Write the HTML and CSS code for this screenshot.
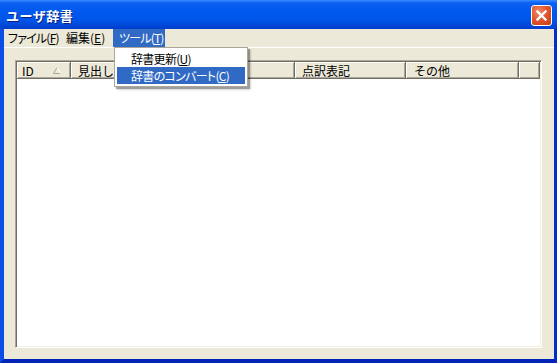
FILE: index.html
```html
<!DOCTYPE html>
<html lang="ja">
<head>
  <meta charset="UTF-8">
  <title>ユーザ辞書</title>
  <link rel="stylesheet" href="styles.css">
</head>
<body>
  <div class="window">
    <div class="titlebar">
      <span class="title">ユーザ辞書</span>
      <button class="close">
        <svg width="11" height="11" viewBox="0 0 11 11"><path d="M1.5 1.5 L9.5 9.5 M9.5 1.5 L1.5 9.5" stroke="#fff" stroke-width="2.4" stroke-linecap="square"/></svg>
      </button>
    </div>
    <div class="frame">
      <div class="menubar">
        <span class="menu menu-file">ファイル(<u>F</u>)</span>
        <span class="menu menu-edit">編集(<u>E</u>)</span>
        <span class="menu menu-tool active">ツール(<u>T</u>)</span>
      </div>
      <div class="client">
        <div class="listview">
          <div class="header">
            <div class="col col-id">ID
              <svg class="sort" width="8" height="7" viewBox="0 0 8 7"><path d="M4 0.5 L0.5 6.5 H7.5" fill="none" stroke="#aca899"/><path d="M4 0.5 L7.5 6.5" fill="none" stroke="#fff"/></svg>
            </div>
            <div class="col col-midashi">見出し</div>
            <div class="col col-yomi"></div>
            <div class="col col-tenyaku">点訳表記</div>
            <div class="col col-other">その他</div>
            <div class="col col-fill"></div>
          </div>
          <div class="rows"></div>
        </div>
      </div>
    </div>

    <div class="dropdown">
      <div class="item">辞書更新(<u>U</u>)</div>
      <div class="item selected">辞書のコンバート(<u>C</u>)</div>
    </div>
  </div>
</body>
</html>
```

FILE: styles.css
```css
body { margin: 0; background: #ece9d8; font-family: "Noto Sans CJK JP", "Liberation Sans", sans-serif; font-size: 12px; color: #000; }
u { text-decoration: underline; text-underline-offset: 1px; }

.window { position: relative; width: 557px; height: 363px; display: flex; flex-direction: column; overflow: hidden; }

.titlebar { height: 29px; flex: none; display: flex; align-items: center; justify-content: space-between; padding: 0 5px 0 6px; box-sizing: border-box;
  background: linear-gradient(to bottom, #3a8cff 0, #0a5ff0 3px, #0058ee 12px, #0055e8 20px, #0048da 25px, #003ccc 29px); }
.title { color: #fff; font-weight: bold; font-size: 13px; letter-spacing: 0.5px; text-shadow: 1px 1px 0 #0a1e80; margin-top: 1px; }
.close { width: 21px; height: 21px; padding: 0; border: 1px solid #fff; border-radius: 3px; display: flex; align-items: center; justify-content: center; margin-top: 1px;
  background: radial-gradient(circle at 35% 30%, #f08a68 0, #e2582f 45%, #c53a14 100%); }
.close svg { display: block; }

.frame { flex: 1; display: flex; flex-direction: column; border-left: 4px solid #0b4fe6; border-right: 3px solid #0030c8; border-bottom: 4px solid #0023b8; background: #ece9d8; }

.menubar { height: 18px; display: flex; border-bottom: 1px solid #fff; }
.menu { box-sizing: border-box; padding-left: 6px; line-height: 18px; font-feature-settings: "palt"; letter-spacing: -0.8px; white-space: nowrap; }
.menu-file { width: 58px; margin-left: -2px; }
.menu-edit { width: 53px; letter-spacing: 0; }
.menu-tool { width: 52px; }
.menu.active { background: #316ac5; color: #fff; }

.client { flex: 1; display: flex; padding: 12px 12px 11px 11px; }
.listview { flex: 1; display: flex; flex-direction: column; background: #fff;
  border: 1px solid; border-color: #aca899 #fff #fff #aca899; box-shadow: inset 1px 1px 0 #716f64, inset -1px -1px 0 #f1efe2; padding: 1px; }

.header { display: flex; height: 17px; flex: none; }
.col { box-sizing: border-box; height: 17px; line-height: 15px; padding-left: 5px; background: #ece9d8; white-space: nowrap; overflow: hidden;
  border-right: 1px solid #716f64; border-bottom: 1px solid #716f64; box-shadow: inset 1px 1px 0 #fff, inset -1px -1px 0 #aca899; display: flex; align-items: center; }
.col-id { width: 54px; }
.col-midashi { width: 112px; padding-left: 7px; }
.col-yomi { width: 112px; padding-left: 7px; }
.col-tenyaku { width: 111px; padding-left: 7px; }
.col-other { width: 113px; padding-left: 8px; }
.col-fill { flex: 1; }
.sort { margin-left: 19px; }

.rows { flex: 1; }

.dropdown { position: absolute; left: 114px; top: 47px; width: 134px; box-sizing: border-box; background: #fff; border: 1px solid #aca899; padding: 2px;
  box-shadow: 2px 2px 1px rgba(0,0,0,0.3), 3px 3px 2px rgba(0,0,0,0.12); }
.item { height: 17px; line-height: 17px; padding-left: 14px; font-feature-settings: "palt"; letter-spacing: -0.7px; white-space: nowrap; }
.item.selected { background: #316ac5; color: #fff; }
```
